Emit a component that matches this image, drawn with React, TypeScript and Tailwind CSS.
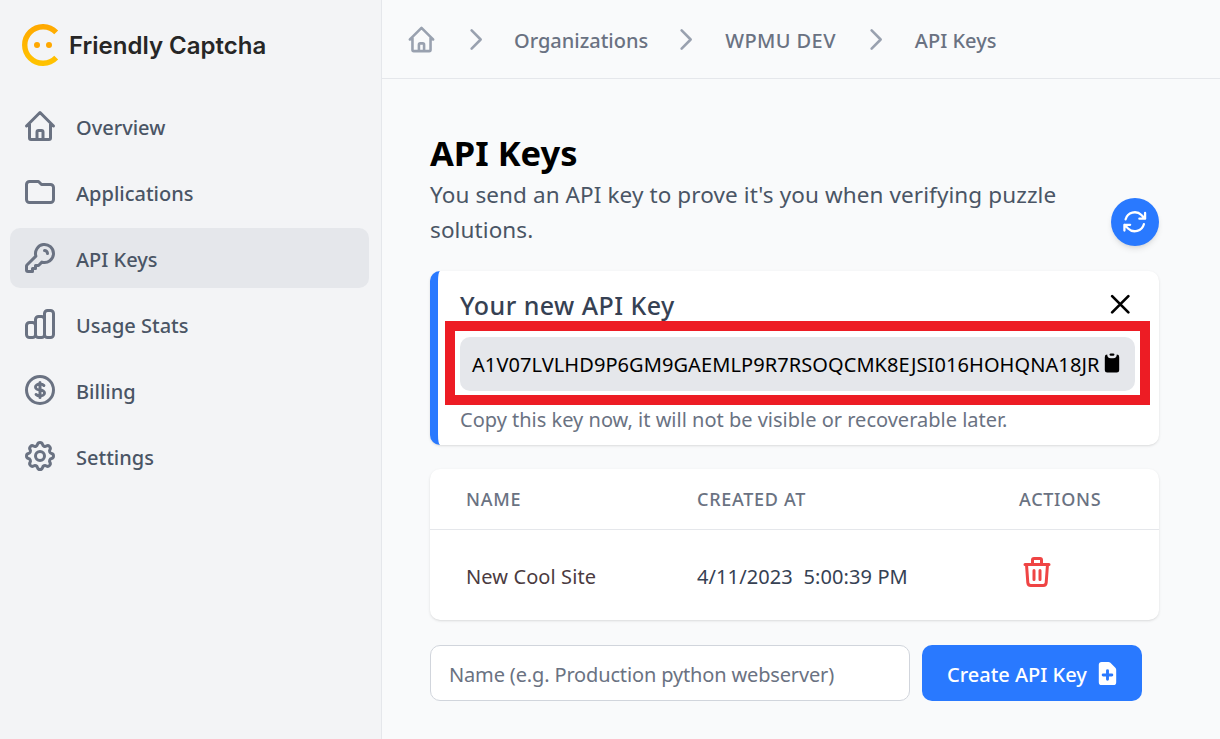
const sans = { fontFamily: '"Noto Sans", "Open Sans", sans-serif' }

function Outline({ d, className }: { d: string | string[]; className: string }) {
	const paths = Array.isArray(d) ? d : [d]
	return (
		<svg viewBox="0 0 24 24" fill="none" stroke="currentColor" strokeWidth={2} strokeLinecap="round" strokeLinejoin="round" className={className}>
			{paths.map((p) => (
				<path key={p} d={p} />
			))}
		</svg>
	)
}

const home = 'M3 12l2-2m0 0l7-7 7 7M5 10v10a1 1 0 001 1h3m10-11l2 2m-2-2v10a1 1 0 01-1 1h-3m-6 0a1 1 0 001-1v-4a1 1 0 011-1h2a1 1 0 011 1v4a1 1 0 001 1m-6 0h6'
const folder = 'M3 7v10a2 2 0 002 2h14a2 2 0 002-2V9a2 2 0 00-2-2h-6l-2-2H5a2 2 0 00-2 2z'
const key = 'M15 7a2 2 0 012 2m4 0a6 6 0 01-7.743 5.743L11 17H9v2H7v2H4a1 1 0 01-1-1v-2.586a1 1 0 01.293-.707l5.964-5.964A6 6 0 1121 9z'
const chart = 'M9 19v-6a2 2 0 00-2-2H5a2 2 0 00-2 2v6a2 2 0 002 2h2a2 2 0 002-2zm0 0V9a2 2 0 012-2h2a2 2 0 012 2v10m-6 0a2 2 0 002 2h2a2 2 0 002-2m0 0V5a2 2 0 012-2h2a2 2 0 012 2v14a2 2 0 01-2 2h-2a2 2 0 01-2-2z'
const dollar = 'M12 8c-1.657 0-3 .895-3 2s1.343 2 3 2 3 .895 3 2-1.343 2-3 2m0-8c1.11 0 2.08.402 2.599 1M12 8V7m0 1v8m0 0v1m0-1c-1.11 0-2.08-.402-2.599-1M21 12a9 9 0 11-18 0 9 9 0 0118 0z'
const cog = [
	'M10.325 4.317c.426-1.756 2.924-1.756 3.35 0a1.724 1.724 0 002.573 1.066c1.543-.94 3.31.826 2.37 2.37a1.724 1.724 0 001.065 2.572c1.756.426 1.756 2.924 0 3.35a1.724 1.724 0 00-1.066 2.573c.94 1.543-.826 3.31-2.37 2.37a1.724 1.724 0 00-2.572 1.065c-.426 1.756-2.924 1.756-3.35 0a1.724 1.724 0 00-2.573-1.066c-1.543.94-3.31-.826-2.37-2.37a1.724 1.724 0 00-1.065-2.572c-1.756-.426-1.756-2.924 0-3.35a1.724 1.724 0 001.066-2.573c-.94-1.543.826-3.31 2.37-2.37.996.608 2.296.07 2.572-1.065z',
	'M15 12a3 3 0 11-6 0 3 3 0 016 0z',
]
const refresh = 'M16.023 9.348h4.992M2.985 19.644v-4.992m0 0h4.992m-4.993 0l3.181 3.183a8.25 8.25 0 0013.803-3.7M4.031 9.865a8.25 8.25 0 0113.803-3.7l3.181 3.182m0-4.991v4.99'
const trash = 'M19 7l-.867 12.142A2 2 0 0116.138 21H7.862a2 2 0 01-1.995-1.858L5 7m5 4v6m4-6v6m1-10V4a1 1 0 00-1-1h-4a1 1 0 00-1 1v3M4 7h16'

const nav: { label: string; d: string | string[]; active?: boolean }[] = [
	{ label: 'Overview', d: home },
	{ label: 'Applications', d: folder },
	{ label: 'API Keys', d: key, active: true },
	{ label: 'Usage Stats', d: chart },
	{ label: 'Billing', d: dollar },
	{ label: 'Settings', d: cog },
]

function Logo() {
	return (
		<svg viewBox="0 0 42 42" className="w-[42px] h-[42px] shrink-0">
			<defs>
				<linearGradient id="logo-ring" x1="0" y1="0" x2="0" y2="42" gradientUnits="userSpaceOnUse">
					<stop offset="0" stopColor="#ffa800" />
					<stop offset="1" stopColor="#ffc400" />
				</linearGradient>
			</defs>
			<path d="M34.2 8.3A18.3 18.3 0 1 0 34.2 33.7" fill="none" stroke="url(#logo-ring)" strokeWidth={5.4} />
			<circle cx="15" cy="21" r="3" fill="#ffa800" />
			<circle cx="27" cy="21" r="3" fill="#ffa800" />
		</svg>
	)
}

function Chevron({ className }: { className: string }) {
	return <Outline d="M9 5l7 7-7 7" className={`w-[31px] h-[31px] text-gray-400 shrink-0 ${className}`} />
}

function Sidebar() {
	return (
		<aside className="w-[382px] shrink-0 bg-gray-100 border-r border-gray-200 px-[10px]">
			<div className="flex items-center gap-[5px] pl-[12px] h-[90px]">
				<Logo />
				<span className="pt-[2px] text-[24px] font-semibold text-[#262626]" style={{ fontFamily: 'Inter, sans-serif' }}>
					Friendly Captcha
				</span>
			</div>
			<nav className="flex flex-col gap-[6px] mt-[6px]">
				{nav.map((item) => (
					<div
						key={item.label}
						className={`flex items-center gap-[18px] h-[60px] w-[359px] px-[12px] rounded-[10px] ${item.active ? 'bg-gray-200' : ''}`}
					>
						<Outline d={item.d} className="w-[36px] h-[36px] text-gray-500 shrink-0" />
						<span className="pt-[4px] text-[20px] font-medium text-gray-600">{item.label}</span>
					</div>
				))}
			</nav>
		</aside>
	)
}

function Breadcrumb() {
	return (
		<div className="flex items-center h-[79px] border-b border-gray-200 pl-[24px] text-[20px] font-medium text-gray-500">
			<Outline d={home} className="w-[31px] h-[31px] text-gray-400 shrink-0" />
			<Chevron className="ml-[23px]" />
			<span className="ml-[23px] pt-[4px]">Organizations</span>
			<Chevron className="ml-[22px]" />
			<span className="ml-[24px] pt-[4px] tracking-[0.4px]">WPMU DEV</span>
			<Chevron className="ml-[24px]" />
			<span className="ml-[24px] pt-[4px]">API Keys</span>
		</div>
	)
}

function NewKeyCard() {
	return (
		<div className="relative h-[174px] mt-[24px] bg-white rounded-[10px] border-l-[8px] border-[#2979ff] shadow-sm pl-[22px] pr-[24px] pt-[17px]">
			<div className="flex items-center justify-between h-[36px]">
				<h2 className="text-[25px] tracking-[0.45px] font-medium text-gray-700">Your new API Key</h2>
				<Outline d="M6 18L18 6M6 6l12 12" className="w-[32.5px] h-[32.5px] text-black mr-[-1px] mt-[-4px]" />
			</div>
			<div className="flex items-center justify-between h-[54px] mt-[13px] pl-[12px] pr-[11px] bg-gray-200 rounded-[10px] text-[20px] tracking-[0.08px] text-black">
				<span className="pt-[2px]">A1V07LVLHD9P6GM9GAEMLP9R7RSOQCMK8EJSI016HOHQNA18JR</span>
				<svg viewBox="0 0 20 20" fill="currentColor" className="w-[24px] h-[24px] shrink-0 mt-[-2px]">
					<path d="M8 3a1 1 0 011-1h2a1 1 0 110 2H9a1 1 0 01-1-1z" />
					<path d="M6 3a2 2 0 00-2 2v11a2 2 0 002 2h8a2 2 0 002-2V5a2 2 0 00-2-2 3 3 0 01-3 3H9a3 3 0 01-3-3z" />
				</svg>
			</div>
			<p className="text-[20px] leading-[30px] text-gray-500 mt-[14px]">Copy this key now, it will not be visible or recoverable later.</p>
			{/* red annotation drawn over the screenshot */}
			<div className="absolute left-[7px] top-[50px] w-[705px] h-[84px] border-[10px] border-[#ed1c24]" />
		</div>
	)
}

function KeysTable() {
	return (
		<div className="h-[151px] mt-[24px] bg-white rounded-[10px] shadow-sm">
			<div className="grid grid-cols-[231px_322px_1fr] h-[61px] items-center border-b border-gray-200 pl-[36px] text-[18px] font-medium tracking-[0.7px] text-gray-500">
				<span>NAME</span>
				<span>CREATED AT</span>
				<span>ACTIONS</span>
			</div>
			<div className="grid grid-cols-[231px_322px_1fr] h-[90px] items-center pl-[36px] text-[20px] tracking-[0.1px] text-gray-700">
				<span className="pt-[3px] text-[#4b3b3f]">New Cool Site</span>
				<span className="pt-[3px]">4/11/2023&nbsp; 5:00:39 PM</span>
				<Outline d={trash} className="w-[36px] h-[36px] text-[#ef4444] mt-[-6px]" />
			</div>
		</div>
	)
}

export default function App() {
	return (
		<div className="flex h-screen overflow-hidden bg-gray-50" style={sans}>
			<Sidebar />
			<main className="flex-1 min-w-0">
				<Breadcrumb />
				<div className="pl-[48px] pr-[61px] pt-[49px]">
					<div className="flex items-end justify-between">
						<div className="w-[660px]">
							<h1 className="text-[34.5px] leading-[50px] font-bold text-black">API Keys</h1>
							<p className="text-[22.5px] leading-[35px] tracking-[0.1px] text-gray-600 mt-[-1px]">You send an API key to prove it's you when verifying puzzle solutions.</p>
						</div>
						<button className="flex items-center justify-center w-[48px] h-[48px] rounded-full bg-[#2979ff] shadow-md text-white mb-[1px]">
							<Outline d={refresh} className="w-[27.5px] h-[27.5px]" />
						</button>
					</div>
					<NewKeyCard />
					<KeysTable />
					<div className="flex gap-[12px] mt-[25px]">
						<div className="flex items-center w-[480px] h-[56px] px-[18px] pt-[3px] bg-white border border-gray-300 rounded-[10px] text-[20px] tracking-[-0.15px] text-gray-500">
							Name (e.g. Production python webserver)
						</div>
						<button className="flex items-center justify-between w-[220px] h-[56px] pl-[25px] pr-[20px] bg-[#2979ff] rounded-[10px] text-[20px] font-medium text-white">
							<span className="pt-[3px]">Create API Key</span>
							<svg viewBox="0 0 20 20" fill="currentColor" className="w-[29px] h-[29px] shrink-0">
								<path
									fillRule="evenodd"
									clipRule="evenodd"
									d="M6 2a2 2 0 00-2 2v12a2 2 0 002 2h8a2 2 0 002-2V7.414A2 2 0 0015.414 6L12 2.586A2 2 0 0010.586 2H6zm5 6a1 1 0 10-2 0v2H7a1 1 0 100 2h2v2a1 1 0 102 0v-2h2a1 1 0 100-2h-2V8z"
								/>
							</svg>
						</button>
					</div>
				</div>
			</main>
		</div>
	)
}
